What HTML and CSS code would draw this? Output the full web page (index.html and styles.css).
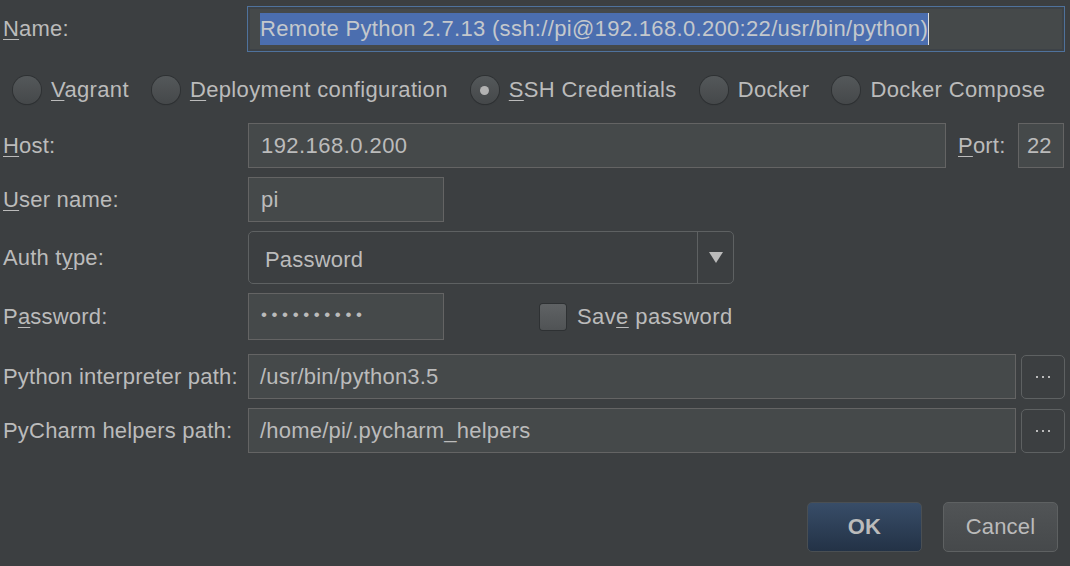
FILE: index.html
```html
<!DOCTYPE html>
<html>
<head>
<meta charset="utf-8">
<link rel="stylesheet" href="styles.css">
</head>
<body>
<div class="dialog">
  <div class="row row-name">
    <div class="label"><u>N</u>ame:</div>
    <div class="field field-focus"><span class="sel">Remote Python 2.7.13 (ssh://pi@192.168.0.200:22/usr/bin/python)</span><span class="caret"></span></div>
  </div>

  <div class="row row-radios">
    <div class="radio-item"><span class="radio"></span><span class="rlabel"><u>V</u>agrant</span></div>
    <div class="radio-item"><span class="radio"></span><span class="rlabel"><u>D</u>eployment configuration</span></div>
    <div class="radio-item"><span class="radio checked"></span><span class="rlabel"><u>S</u>SH Credentials</span></div>
    <div class="radio-item"><span class="radio"></span><span class="rlabel">Docker</span></div>
    <div class="radio-item"><span class="radio"></span><span class="rlabel">Docker Compose</span></div>
  </div>

  <div class="row row-host">
    <div class="label"><u>H</u>ost:</div>
    <div class="field field-host">192.168.0.200</div>
    <div class="port-label"><u>P</u>ort:</div>
    <div class="field field-port">22</div>
  </div>

  <div class="row row-user">
    <div class="label"><u>U</u>ser name:</div>
    <div class="field field-short">pi</div>
  </div>

  <div class="row row-auth">
    <div class="label">Auth t<u>y</u>pe:</div>
    <div class="combo">
      <div class="combo-text">Password</div>
      <div class="combo-arrow"><span class="tri"></span></div>
    </div>
  </div>

  <div class="row row-pass">
    <div class="label">P<u>a</u>ssword:</div>
    <div class="field field-short field-pass"><span class="dots">••••••••••</span></div>
    <div class="check-item"><span class="checkbox"></span><span class="clabel">Sav<u>e</u> password</span></div>
  </div>

  <div class="row row-path row-python">
    <div class="label">Python interpreter path:</div>
    <div class="field field-path">/usr/bin/python3.5</div>
    <div class="browse"><span class="d"></span><span class="d"></span><span class="d"></span></div>
  </div>

  <div class="row row-path row-helpers">
    <div class="label">PyCharm helpers path:</div>
    <div class="field field-path">/home/pi/.pycharm_helpers</div>
    <div class="browse"><span class="d"></span><span class="d"></span><span class="d"></span></div>
  </div>

  <div class="row row-buttons">
    <div class="btn btn-ok">OK</div>
    <div class="btn btn-cancel">Cancel</div>
  </div>
</div>
</body>
</html>
```

FILE: styles.css
```css
* { box-sizing: border-box; }
html, body {
  margin: 0;
  padding: 0;
  background: #3c3f41;
}
body {
  width: 1070px;
  height: 566px;
  overflow: hidden;
  font-family: "Liberation Sans", Arial, sans-serif;
  font-size: 22px;
  letter-spacing: 0.2px;
  color: #bbbbbb;
}
u { text-decoration: underline; text-underline-offset: 3px; text-decoration-thickness: 1px; }

.dialog {
  display: flex;
  flex-direction: column;
  padding: 6px 6px 0 3px;
}
.row {
  display: flex;
  align-items: center;
}
.label {
  width: 245px;
  flex: none;
  white-space: nowrap;
}
.field {
  height: 45px;
  background: #45494a;
  border: 1px solid #646464;
  display: flex;
  align-items: center;
  padding-left: 12px;
  white-space: nowrap;
  overflow: hidden;
}

/* Name */
.row-name { height: 46px; }
.field-focus {
  flex: 1;
  height: 46px;
  margin-left: -1px;
  margin-right: -1px;
  border: 1px solid #4f729c;
  box-shadow: inset 0 0 0 2px #3d4247;
  padding-left: 12px;
  letter-spacing: 0.33px;
}
.sel {
  background: #4b6eaf;
  color: #c4c8cc;
  line-height: 32px;
  height: 32px;
  display: inline-block;
}
.caret {
  display: inline-block;
  width: 1px;
  height: 32px;
  background: #e0e0e0;
}

/* Radios */
.row-radios {
  margin-top: 24px;
  height: 28px;
  padding-left: 10px;
  gap: 23px;
}
.radio-item {
  display: flex;
  align-items: center;
  gap: 10px;
  white-space: nowrap;
}
.rlabel { letter-spacing: 0.35px; }
.radio {
  width: 28px;
  height: 28px;
  border-radius: 50%;
  background: linear-gradient(#54585a, #45484a);
  box-shadow: 0 0 0 1px #2e3133, 0 1px 1px #2a2c2e;
  display: flex;
  align-items: center;
  justify-content: center;
  flex: none;
}
.radio.checked::after {
  content: "";
  width: 9px;
  height: 9px;
  border-radius: 50%;
  background: #b3b3b3;
}

/* Host */
.row-host { margin-top: 19px; height: 45px; }
.field-host { width: 698px; flex: none; letter-spacing: 0.45px; }
.port-label { margin-left: 12px; width: 60px; flex: none; }
.field-port {
  width: 46px;
  flex: none;
  padding-left: 8px;
  letter-spacing: 0;
}

/* User */
.row-user { margin-top: 9px; height: 45px; }
.field-short { width: 196px; flex: none; }

/* Auth */
.row-auth { margin-top: 9px; height: 53px; }
.combo {
  width: 486px;
  height: 53px;
  border: 1px solid #5e6162;
  border-radius: 5px;
  display: flex;
  background: #3c3f41;
}
.combo-text {
  flex: 1;
  display: flex;
  align-items: center;
  padding-left: 16px;
  padding-top: 4px;
  border-right: 1px solid #5e6162;
}
.combo-arrow {
  width: 35px;
  display: flex;
  align-items: center;
  justify-content: center;
}
.tri {
  width: 0;
  height: 0;
  border-left: 7px solid transparent;
  border-right: 7px solid transparent;
  border-top: 11px solid #bbbbbb;
}

/* Password */
.row-pass { margin-top: 9px; height: 47px; }
.field-pass { height: 47px; padding-left: 12px; }
.dots {
  font-size: 17px;
  letter-spacing: 4.6px;
  color: #bbbbbb;
  margin-top: -3px;
}
.check-item {
  display: flex;
  align-items: center;
  margin-left: 96px;
  gap: 11px;
  white-space: nowrap;
}
.clabel { letter-spacing: 0.4px; }
.checkbox {
  width: 26px;
  height: 26px;
  border-radius: 3px;
  background: linear-gradient(#5f6264, #505355);
  box-shadow: 0 0 0 1px #2e3133;
  flex: none;
}

/* Paths */
.row-path { height: 45px; }
.row-python { margin-top: 14px; }
.row-helpers { margin-top: 9px; }
.field-path { width: 768px; flex: none; letter-spacing: 0.2px; padding-left: 11px; }
.browse {
  margin-left: 5px;
  width: 44px;
  height: 44px;
  border: 1px solid #5e6162;
  border-radius: 5px;
  display: flex;
  align-items: center;
  justify-content: center;
  gap: 4px;
  flex: none;
}
.browse .d {
  width: 2px;
  height: 2px;
  background: #bbbbbb;
}

/* Buttons */
.row-buttons {
  margin-top: 49px;
  justify-content: flex-end;
  gap: 21px;
  padding-right: 6px;
}
.btn {
  width: 115px;
  height: 50px;
  border-radius: 5px;
  display: flex;
  align-items: center;
  justify-content: center;
}
.btn-ok {
  background: linear-gradient(#384d68, #233246);
  border: 1px solid #4a4f53;
  font-weight: bold;
}
.btn-cancel {
  background: linear-gradient(#515456, #46494b);
  border: 1px solid #5e6162;
}
```
